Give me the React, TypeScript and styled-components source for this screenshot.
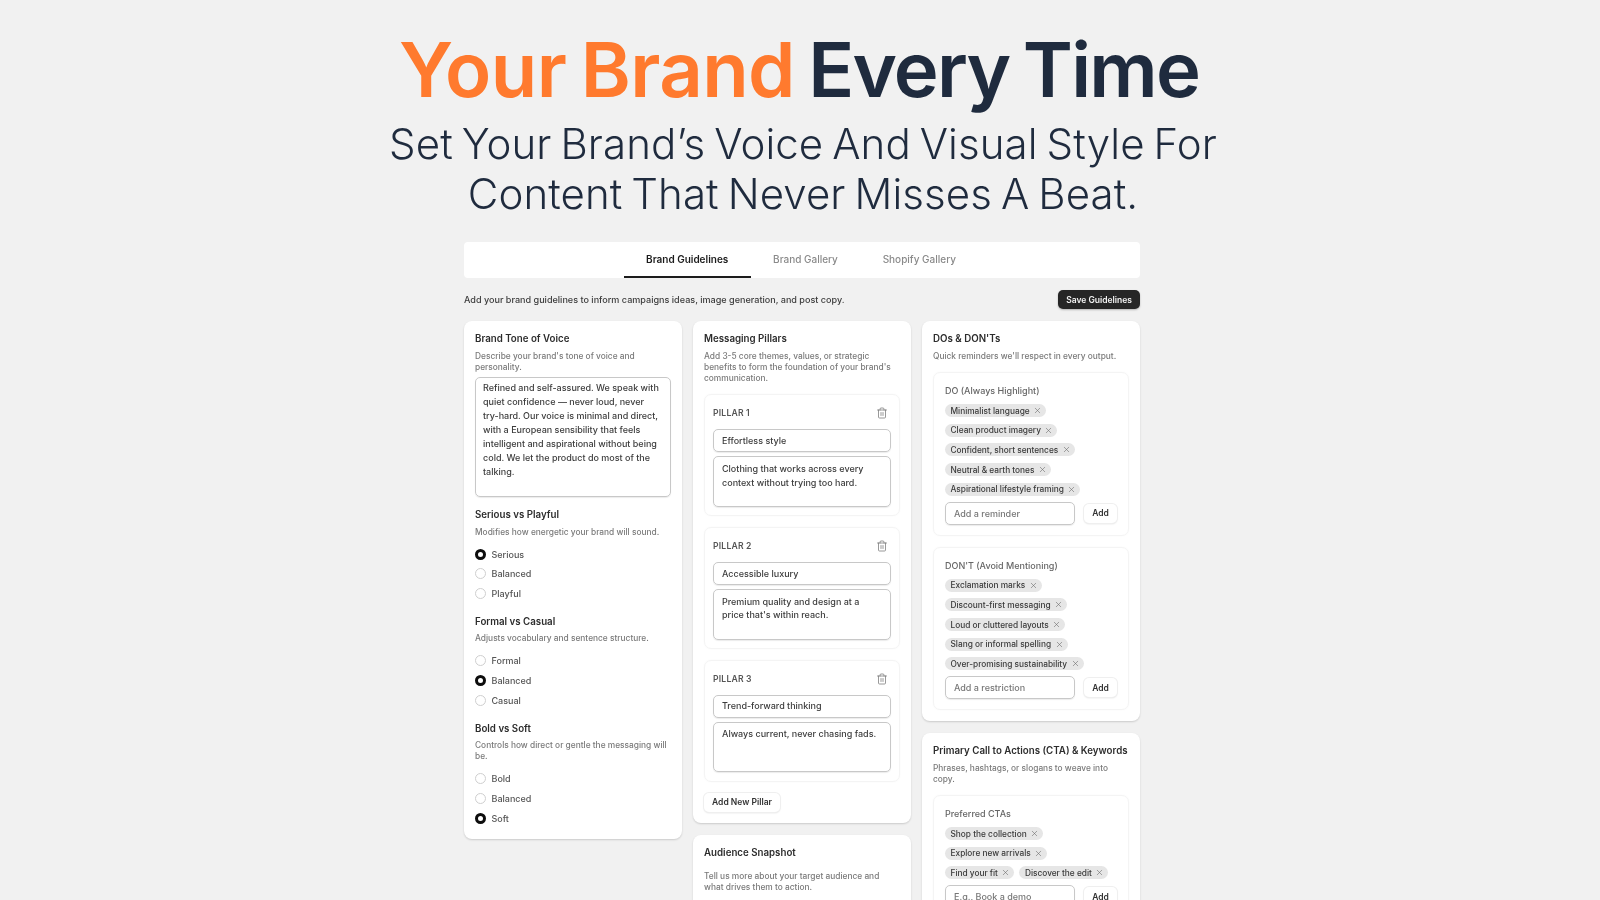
import React from "react";
import styled, { createGlobalStyle } from "styled-components";
import { Trash2, X } from "lucide-react";

const Global = createGlobalStyle`
  html, body { margin: 0; padding: 0; background: #f1f1f1; }
  * { box-sizing: border-box; }
  body { font-family: Inter, "Liberation Sans", sans-serif; }
`;
const Page = styled.div`
  width: 1600px; height: 900px; overflow: hidden; background: #f1f1f1;
  display: flex; flex-direction: column; align-items: center; filter: blur(0.3px);
`;
const Headline = styled.h1`
  margin: 19px 0 0; padding-right: 2px; font-size: 76px; line-height: 100px; font-weight: 600;
  letter-spacing: -1.8px; word-spacing: -4px;
  color: #1f2b3e; white-space: nowrap; text-align: center;
`;
const Accent = styled.span`color: #ff7a2e; letter-spacing: -0.6px;`;
const Tagline = styled.p`
  margin: 0; font-size: 42px; line-height: 50px; font-weight: 300; letter-spacing: 0.1px; word-spacing: -3px;
  color: #1f2b3e; text-align: center; white-space: nowrap; padding-left: 6px;
`;
const Shell = styled.div`
  width: 676px; margin: 23px 0 0 4px; display: flex; flex-direction: column;
`;
const TabBar = styled.div`
  height: 36px; background: #fff; border-radius: 4px; display: flex; justify-content: center; padding-right: 2px;
`;
const Tab = styled.div<{ $on?: boolean }>`
  height: 36px; padding: 0 22.4px; display: flex; align-items: center; font-size: 10px;
  font-weight: ${p => (p.$on ? 600 : 500)};
  color: ${p => (p.$on ? "#1c1c1c" : "#8a8a8a")};
  border-bottom: 2px solid ${p => (p.$on ? "#1c1c1c" : "transparent")};
`;
const IntroRow = styled.div`
  height: 43px; display: flex; align-items: center; justify-content: space-between;
`;
const Intro = styled.span`font-size: 9.07px; color: #3c3c3c; font-weight: 450;`;
const Save = styled.button`
  width: 82px; height: 19px; padding: 0; border: 0; border-radius: 5px; background: #262626; color: #f3f3f3;
  font: 600 8.5px Inter, sans-serif; box-shadow: 0 1px 2px rgba(0,0,0,.25);
`;
const Columns = styled.div`display: grid; grid-template-columns: repeat(3, 218px); gap: 11px; align-items: start;`;
const Stack = styled.div`display: flex; flex-direction: column; gap: 12px;`;
const Card = styled.section`
  background: #fff; border-radius: 8px; padding: 11px; box-shadow: 0 1px 2px rgba(0,0,0,.16);
`;
const Title = styled.h3`margin: 0; font-size: 9.72px; line-height: 14px; font-weight: 600; color: #2c2c2c; white-space: nowrap;`;
const Sub = styled.p`
  margin: 4.5px 0 -0.5px; font-size: 8.35px; line-height: 11.3px; color: #7a7a7a; font-weight: 450;
`;
const Area = styled.div<{ $h: number }>`
  height: ${p => p.$h}px; border: 1px solid #c8c8c8; border-radius: 5px; padding: 3px 8.5px 0 7px;
  font-size: 9px; line-height: 14px; color: #3d3d3d; box-shadow: 0 1px 1px rgba(0,0,0,.08); font-weight: 450;
`;
const ToneArea = styled(Area)`margin-top: 4px;`;
const Group = styled.div`margin-top: 11.6px;`;
const Radios = styled.div`margin-top: 7px; display: flex; flex-direction: column;`;
const RadioRow = styled.div`height: 19.6px; display: flex; align-items: center; gap: 5.5px; font-size: 9px; color: #555; font-weight: 450;`;
const Dot = styled.span<{ $on?: boolean }>`
  width: 11px; height: 11px; border-radius: 50%; background: #fff; flex: none;
  border: ${p => (p.$on ? "3.2px solid #0d0d0d" : "1px solid #cfcfcf")};
`;
const SoftBox = styled.div`
  border: 1px solid #f4f4f4; border-radius: 7px; box-shadow: 0 0 2px rgba(0,0,0,.03);
`;
const PillarBox = styled(SoftBox)`
  height: 122px; margin-top: 10.6px; padding: 12px 8px 0; display: flex; flex-direction: column;
`;
const PillarHead = styled.div`
  height: 12px; padding-right: 3.5px; display: flex; justify-content: space-between; align-items: center;
  font-size: 8.6px; font-weight: 600; color: #555; letter-spacing: .2px;
`;
const Field = styled.div<{ $muted?: boolean }>`
  height: 23px; flex: none; border: 1px solid #c8c8c8; border-radius: 5px; padding: 0 8px; display: flex; align-items: center;
  font-size: 9px; font-weight: 450; color: ${p => (p.$muted ? "#777" : "#3d3d3d")}; box-shadow: 0 1px 1px rgba(0,0,0,.08);
`;
const PillarField = styled(Field)`margin-top: 10px; padding-bottom: 1px;`;
const PillarArea = styled(Area)`margin-top: 4px; line-height: 13.6px; padding: 4.5px 8px 0;`;
const Ghost = styled.button`
  height: 19px; padding: 0; border: 0; border-radius: 5px; background: #fff; color: #333;
  font: 600 8.5px Inter, sans-serif; box-shadow: 0 0 0 1px #efefef, 0 1px 2px rgba(0,0,0,.14); white-space: nowrap;
`;
const AddPillar = styled(Ghost)`margin-top: 11px; width: 76px; display: block;`;
const Box = styled(SoftBox)`margin-top: 11px; padding: 12px 11px 10px;`;
const BoxLabel = styled.div`font-size: 9px; line-height: 12px; color: #666; font-weight: 450;`;
const Chips = styled.div`margin-top: 7px; display: flex; flex-wrap: wrap; gap: 6.6px 5px;`;
const Chip = styled.span`
  height: 13px; padding: 0 4px 0 5.5px; display: inline-flex; align-items: center; gap: 3.5px; border-radius: 7px;
  background: #e6e6e6; color: #3a3a3a; font-size: 8.3px; font-weight: 500; white-space: nowrap;
  & > svg { color: #666; }
`;
const AddRow = styled.div`margin-top: 6.2px; display: flex; align-items: center; gap: 9px;`;
const AddField = styled(Field)`width: 130px;`;
const AddBtn = styled(Ghost)`width: 33px;`;
const AudienceSub = styled(Sub)`margin-top: 11px;`;
const AudienceCard = styled(Card)`height: 120px;`;
const CtaCard = styled(Card)`& > ${Box} { margin-top: 10px; }`;

const Radio = ({ items, on }: { items: string[]; on: number }) => (
  <Radios>
    {items.map((t, i) => (
      <RadioRow key={t}><Dot $on={i === on} />{t}</RadioRow>
    ))}
  </Radios>
);
const Pillar = ({ n, name, text }: { n: number; name: string; text: string }) => (
  <PillarBox>
    <PillarHead>PILLAR {n}<Trash2 size={12} color="#777" strokeWidth={1.5} /></PillarHead>
    <PillarField>{name}</PillarField>
    <PillarArea $h={50.6}>{text}</PillarArea>
  </PillarBox>
);
const TagBox = ({ label, tags, ph }: { label: string; tags: string[]; ph: string }) => (
  <Box>
    <BoxLabel>{label}</BoxLabel>
    <Chips>
      {tags.map(t => <Chip key={t}>{t}<X size={9} strokeWidth={1.5} /></Chip>)}
    </Chips>
    <AddRow><AddField $muted>{ph}</AddField><AddBtn>Add</AddBtn></AddRow>
  </Box>
);

export default function App() {
  return (
    <Page>
      <Global />
      <Headline><Accent>Your Brand</Accent> Every Time</Headline>
      <Tagline>Set Your Brand’s Voice And Visual Style For<br />Content That Never Misses A Beat.</Tagline>
      <Shell>
        <TabBar>
          <Tab $on>Brand Guidelines</Tab>
          <Tab>Brand Gallery</Tab>
          <Tab>Shopify Gallery</Tab>
        </TabBar>
        <IntroRow>
          <Intro>Add your brand guidelines to inform campaigns ideas, image generation, and post copy.</Intro>
          <Save>Save Guidelines</Save>
        </IntroRow>
        <Columns>
          <Card>
            <Title>Brand Tone of Voice</Title>
            <Sub>Describe your brand's tone of voice and personality.</Sub>
            <ToneArea $h={120}>Refined and self-assured. We speak with quiet confidence — never loud, never try-hard. Our voice is minimal and direct, with a European sensibility that feels intelligent and aspirational without being cold. We let the product do most of the talking.</ToneArea>
            <Group>
              <Title>Serious vs Playful</Title>
              <Sub>Modifies how energetic your brand will sound.</Sub>
              <Radio items={["Serious", "Balanced", "Playful"]} on={0} />
            </Group>
            <Group>
              <Title>Formal vs Casual</Title>
              <Sub>Adjusts vocabulary and sentence structure.</Sub>
              <Radio items={["Formal", "Balanced", "Casual"]} on={1} />
            </Group>
            <Group>
              <Title>Bold vs Soft</Title>
              <Sub>Controls how direct or gentle the messaging will be.</Sub>
              <Radio items={["Bold", "Balanced", "Soft"]} on={2} />
            </Group>
          </Card>
          <Stack>
            <Card>
              <Title>Messaging Pillars</Title>
              <Sub>Add 3-5 core themes, values, or strategic benefits to form the foundation of your brand's communication.</Sub>
              <Pillar n={1} name="Effortless style" text="Clothing that works across every context without trying too hard." />
              <Pillar n={2} name="Accessible luxury" text="Premium quality and design at a price that's within reach." />
              <Pillar n={3} name="Trend-forward thinking" text="Always current, never chasing fads." />
              <AddPillar>Add New Pillar</AddPillar>
            </Card>
            <AudienceCard>
              <Title>Audience Snapshot</Title>
              <AudienceSub>Tell us more about your target audience and what drives them to action.</AudienceSub>
            </AudienceCard>
          </Stack>
          <Stack>
            <Card>
              <Title>DOs &amp; DON'Ts</Title>
              <Sub>Quick reminders we'll respect in every output.</Sub>
              <TagBox label="DO (Always Highlight)" ph="Add a reminder" tags={["Minimalist language", "Clean product imagery", "Confident, short sentences", "Neutral & earth tones", "Aspirational lifestyle framing"]} />
              <TagBox label="DON'T (Avoid Mentioning)" ph="Add a restriction" tags={["Exclamation marks", "Discount-first messaging", "Loud or cluttered layouts", "Slang or informal spelling", "Over-promising sustainability"]} />
            </Card>
            <CtaCard>
              <Title>Primary Call to Actions (CTA) &amp; Keywords</Title>
              <Sub>Phrases, hashtags, or slogans to weave into copy.</Sub>
              <TagBox label="Preferred CTAs" ph="E.g., Book a demo" tags={["Shop the collection", "Explore new arrivals", "Find your fit", "Discover the edit"]} />
            </CtaCard>
          </Stack>
        </Columns>
      </Shell>
    </Page>
  );
}
